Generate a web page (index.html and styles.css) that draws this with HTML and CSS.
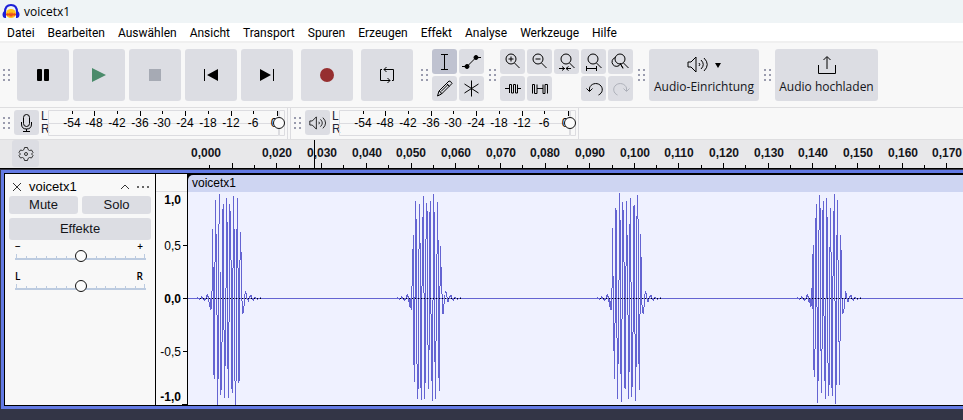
FILE: index.html
```html
<!DOCTYPE html>
<html lang="de">
<head>
<meta charset="utf-8">
<title>voicetx1</title>
<link rel="stylesheet" href="styles.css">
</head>
<body>
<header class="titlebar">
  <svg class="logo" width="18" height="18" viewBox="0 0 18 18" aria-hidden="true">
    <ellipse cx="9" cy="10.500" rx="5" ry="4.500" fill="#ffc21c"/>
    <path d="M4 11l2-1 1 1 1-2 1 2 1-2 1 2 1-1 2 1v1l-2 1-1-1-1 2-1-1-1 1-1-2-1 1-2-1z" fill="#f0501a"/>
    <path d="M3 9C3 4 5.500 2 9 2s6 2 6 7" fill="none" stroke="#1d20d8" stroke-width="2"/>
    <path d="M4 7v8C1.500 15.500.5 13.500.5 11.500S2 7.500 4 7zM14 7v8c2.500.5 3.500-1.500 3.500-3.500S16 7.500 14 7z" fill="#1d20d8"/>
  </svg>
  <span>voicetx1</span>
</header>
<nav class="menubar">
  <a href="#">Datei</a><a href="#">Bearbeiten</a><a href="#">Auswählen</a><a href="#">Ansicht</a><a href="#">Transport</a><a href="#">Spuren</a><a href="#">Erzeugen</a><a href="#">Effekt</a><a href="#">Analyse</a><a href="#">Werkzeuge</a><a href="#">Hilfe</a>
</nav>

<svg class="defs" width="0" height="0" aria-hidden="true">
  <defs>
    <g id="grip" fill="#9a9cae"><path d="M0 0h2v2H0zM5 0h2v2H5zM0 5h2v2H0zM5 5h2v2H5zM0 10h2v2H0zM5 10h2v2H5z"/></g>
    <g id="lens"><circle cx="11" cy="10" r="5"/><path d="M14.500 14l5 5"/></g>
    <g id="speaker"><path d="M1 7h3l5-5v15l-5-5H1z"/><path d="M12 8q1.500 1.500 0 3M14 5q4.500 4.500 0 9M17 3q6.500 6.500 0 13"/></g>
    <path id="wiggle" stroke-width="3" d="M43.500 0V3M52.500-3V0M58.500 0V4M64.500-6V0M67.500-3V3M70.500 0V5M73.500 0V7M76.500 0V4M79.500-9V0M82.500-12V-4M85.500-7V12M205.500 2V12M208.500-7V0M211.500-10V-4M214.500-9V0M217.500 0V4M220.500 0V7M223.500-3V0M226.500-5V0M232.500 0V4M241.500-4V0M247.500 0V3M264.500 0V3"/>
    <path id="dots" stroke="#000" stroke-width="3" stroke-dasharray="3 6" d="M60 0H250"/>
    <g id="scale">
      <path d="M.5.5H230.500V25.500H.5zM231.500.5H236.500V25.500H231.500zM0 13.500H230" fill="none" stroke="#dcdce0"/>
      <path d="M24.500 1v3M46.500 1v5M69.500 1v3M92.500 1v5M114.500 1v3M137.500 1v5M160.500 1v3M183.500 1v5M205.500 1v3M229.500 1v5" stroke="#000"/>
      <g class="scale-text" text-anchor="middle">
        <text x="24" y="17">-54</text><text x="46" y="17">-48</text><text x="69" y="17">-42</text><text x="92" y="17">-36</text><text x="114" y="17">-30</text><text x="137" y="17">-24</text><text x="160" y="17">-18</text><text x="183" y="17">-12</text><text x="205" y="17">-6</text><text x="226" y="17">0</text>
      </g>
    </g>
    <path id="slider-scale" stroke="#bccbe0" d="M0 9.500H131M0 10.500H131M1.500 5v5M11.500 7v3M21.500 7v3M31.500 7v3M41.500 7v3M51.500 7v3M61.500 7v3M71.500 7v3M81.500 7v3M90.500 7v3M100.500 7v3M110.500 7v3M120.500 7v3M129.500 5v5"/>
  </defs>
</svg>

<section class="toolbar" aria-label="Werkzeugleisten">
  <svg class="grip" width="7" height="12"><use href="#grip"/></svg>
  <div class="group">
    <button class="big" aria-label="Pause"><svg width="24" height="24"><rect x="6" y="6" width="5" height="12" rx="1"/><rect x="13" y="6" width="5" height="12" rx="1"/></svg></button>
    <button class="big" aria-label="Wiedergabe"><svg width="24" height="24"><path d="M5 5v14l14-7z" fill="#4b8b6b"/></svg></button>
    <button class="big" aria-label="Stopp"><svg width="24" height="24"><path d="M6 6h12v12H6z" fill="#a6aab4"/></svg></button>
    <button class="big" aria-label="Zum Anfang"><svg width="24" height="24"><path d="M5 6h1v12H5zM19 6v12L8 12z"/></svg></button>
    <button class="big" aria-label="Zum Ende"><svg width="24" height="24"><path d="M18 6h1v12h-1zM5 6v12l11-6z"/></svg></button>
  </div>
  <button class="big apart" aria-label="Aufnahme"><svg width="24" height="24"><circle cx="12" cy="12" r="7" fill="#962f30"/></svg></button>
  <button class="big apart" aria-label="Schleife"><svg class="line" width="24" height="24"><path d="M7 6.500H5.500V17.500H15M17 17.500h1.500V6.500H9M11.500 4L9 6.500 11.500 9M12.500 15l2.500 2.500L12.500 20"/></svg></button>
  <svg class="grip wide" width="7" height="12"><use href="#grip"/></svg>
  <div class="tools two">
    <button class="small on" aria-label="Auswahl"><svg class="line" width="25" height="25"><path d="M9 5.500h7M12.500 5.500V20M9 20.500h7"/></svg></button>
    <button class="small" aria-label="Hüllkurve"><svg class="line" width="25" height="25"><path d="M3 17.500h5L17 8.500h5"/><circle cx="8" cy="17.500" r="2" fill="#000"/><circle cx="17" cy="8.500" r="2" fill="#000"/></svg></button>
    <button class="small" aria-label="Zeichnen"><svg class="line" width="25" height="25"><path d="M5.500 20l1.500-5L17 5q1.500-.5 3 2.500L9.500 18zM14.500 7.500l3 3M7 15q2 .5 2.500 3M9 15.500l7-7"/></svg></button>
    <button class="small" aria-label="Multi-Werkzeug"><svg class="line" width="25" height="25"><path d="M12.500 4.500v16M5.500 8l14 9M19.500 8l-14 9"/></svg></button>
  </div>
  <svg class="grip" width="7" height="12"><use href="#grip"/></svg>
  <div class="tools five">
    <button class="small" aria-label="Vergrößern"><svg class="line" width="25" height="25"><use href="#lens"/><path d="M8.500 10h5M11 7.500v5"/></svg></button>
    <button class="small" aria-label="Verkleinern"><svg class="line" width="25" height="25"><use href="#lens"/><path d="M8.500 10h5"/></svg></button>
    <button class="small" aria-label="Auswahl einpassen"><svg class="line" width="25" height="25"><use href="#lens" x="1"/><path d="M5 19.500h6M12 19.500h5M8 17.500l2.500 2-2.500 2M14.500 17.500l-2.500 2 2.500 2"/></svg></button>
    <button class="small" aria-label="Projekt einpassen"><svg class="line" width="25" height="25"><use href="#lens" x="1"/><path d="M5.500 17v5M15.500 17v5M5.500 19.500h10"/></svg></button>
    <button class="small" aria-label="Zoom umschalten"><svg class="line" width="25" height="25"><use href="#lens" x="1"/><path d="M7.500 8.500A4.500 4.500 0 1 0 12.500 15L15 19.500M12 14l3 5"/></svg></button>
    <button class="small" aria-label="Trimmen"><svg class="line" width="25" height="25"><path d="M5 12.500h4M9.500 17V8.500h2V17h2V8.500h2V17h2V8.500M17.500 12.500H21"/></svg></button>
    <button class="small" aria-label="Stille"><svg class="line" width="25" height="25"><path d="M5.500 17.500V8.500h2v9h2.500v-9M10 12.500h6M16 17.500V8.500M16 17.500h2v-9h2.500v9"/></svg></button>
    <button class="small undo" aria-label="Rückgängig"><svg class="line" width="25" height="25"><path d="M8.500 15V12a6.500 6 0 1 1 9 7M5.500 12.500l3 3 3-3"/></svg></button>
    <button class="small" aria-label="Wiederholen"><svg class="line pale" width="25" height="25"><path d="M18.500 15V12a6.500 6 0 1 0-9 7M21.500 12.500l-3 3-3-3"/></svg></button>
  </div>
  <svg class="grip" width="7" height="12"><use href="#grip"/></svg>
  <button class="labelled setup"><span class="pair"><svg class="line" width="22" height="20"><use href="#speaker"/></svg><svg width="6" height="5"><path d="M0 0h6L3 5z"/></svg></span><span>Audio-Einrichtung</span></button>
  <svg class="grip" width="7" height="12"><use href="#grip"/></svg>
  <button class="labelled upload"><svg class="line" width="20" height="20"><path d="M1.500 10v8.500h17V10M10 14V2M6.500 5L10 1.500 13.500 5"/></svg><span>Audio hochladen</span></button>
</section>

<section class="meters" aria-label="Pegel">
  <div class="meter-bar">
    <svg class="grip" width="7" height="12"><use href="#grip"/></svg>
    <button class="small" aria-label="Aufnahmepegel"><svg class="line" width="25" height="25"><rect x="9.500" y="4.500" width="6" height="12" rx="3"/><path d="M7.500 12v2q0 5 5 5t5-5v-2M12.500 19v2M9 21.500h7"/></svg></button>
    <div class="channels"><span>L</span><span>R</span></div>
    <div class="meter"><svg width="237" height="26"><use href="#scale"/></svg><input type="range" value="100" aria-label="Aufnahmelautstärke"></div>
  </div>
  <div class="meter-bar">
    <svg class="grip" width="7" height="12"><use href="#grip"/></svg>
    <button class="small" aria-label="Wiedergabepegel"><svg class="line" width="18" height="16" viewBox="0 0 22 19"><use href="#speaker"/></svg></button>
    <div class="channels"><span>L</span><span>R</span></div>
    <div class="meter"><svg width="237" height="26"><use href="#scale"/></svg><input type="range" value="100" aria-label="Wiedergabelautstärke"></div>
  </div>
</section>

<section class="timeline" aria-label="Zeitachse">
  <div class="timeline-head"><button class="gear" aria-label="Zeitachsenoptionen"><svg class="line dim" width="16" height="16"><path d="M6.500 1.500h3l.5 2 1.500 1 2-.5 1.500 2.500L13.500 8l1.500 1.500-1.500 2.500-2-.5-1.500 1-.5 2h-3l-.5-2-1.500-1-2 .5L1 9.500 2.500 8 1 6.500 2.500 4l2 .5 1.500-1z"/><circle cx="8" cy="8" r="1.500"/></svg></button></div>
  <svg class="time-ruler" height="28">
    <path stroke="#000" d="M21.500 25v3M44.500 23v5M66.500 25v3M88.500 23v5M111.500 25v3M133.500 23v5M155.500 25v3M178.500 23v5M200.500 25v3M223.500 23v5M245.500 25v3M267.500 23v5M290.500 25v3M312.500 23v5M334.500 25v3M357.500 23v5M379.500 25v3M401.500 23v5M424.500 25v3M446.500 23v5M468.500 25v3M490.500 23v5M513.500 25v3M535.500 23v5M557.500 25v3M580.500 23v5M602.500 25v3M624.500 23v5M647.500 25v3M669.500 23v5M691.500 25v3M714.500 23v5M736.500 25v3M758.500 23v5"/>
    <path stroke="#000" d="M126.500 0v28"/>
    <g class="time-text" text-anchor="middle">
      <text x="18" y="17">0,000</text><text x="89" y="17">0,020</text><text x="134" y="17">0,030</text><text x="179" y="17">0,040</text><text x="223" y="17">0,050</text><text x="268" y="17">0,060</text><text x="313" y="17">0,070</text><text x="357" y="17">0,080</text><text x="402" y="17">0,090</text><text x="447" y="17">0,100</text><text x="491" y="17">0,110</text><text x="536" y="17">0,120</text><text x="581" y="17">0,130</text><text x="625" y="17">0,140</text><text x="670" y="17">0,150</text><text x="715" y="17">0,160</text><text x="759" y="17">0,170</text>
    </g>
  </svg>
</section>

<main class="tracks">
  <article class="track">
    <aside class="panel">
      <div class="panel-head">
        <button class="bare" aria-label="Spur schließen"><svg class="line dim" width="10" height="10"><path d="M1 1l8 8M9 1L1 9"/></svg></button>
        <span class="name">voicetx1</span>
        <button class="bare" aria-label="Einklappen"><svg class="line dim" width="10" height="10"><path d="M1 7l4-4 4 4"/></svg></button>
        <button class="bare" aria-label="Menü"><svg width="12" height="10" fill="#666"><path d="M0 4h2v2H0zM5 4h2v2H5zM10 4h2v2h-2z"/></svg></button>
      </div>
      <div class="panel-buttons"><button>Mute</button><button>Solo</button><button class="effects">Effekte</button></div>
      <div class="slider">
        <div class="ends"><span>−</span><span>+</span></div>
        <div class="rail"><svg width="131" height="13"><use href="#slider-scale"/></svg><input type="range" value="50" aria-label="Verstärkung"></div>
      </div>
      <div class="slider">
        <div class="ends"><span>L</span><span>R</span></div>
        <div class="rail"><svg width="131" height="13"><use href="#slider-scale"/></svg><input type="range" value="50" aria-label="Panorama"></div>
      </div>
    </aside>
    <svg class="level-ruler" width="31" height="231">
      <path d="M0 17.500H31" stroke="#dcdce0"/>
      <path d="M27 71.500h4M27 124.500h4M27 177.500h4M26 230.500h5" stroke="#000"/>
      <g text-anchor="end">
        <text class="strong" x="25" y="30">1,0</text><text x="25" y="76">0,5</text><text class="strong" x="25" y="129">0,0</text><text x="25" y="182">-0,5</text><text class="strong" x="25" y="227">-1,0</text>
      </g>
    </svg>
    <div class="clip">
      <div class="clip-head">voicetx1</div>
      <svg class="wave" height="213" fill="none" stroke="#6464d2" shape-rendering="crispEdges">
        <path d="M0 106.500H4000"/>
        <g transform="translate(-8 -22) scale(.33333)">
          <use href="#wiggle" y="385"/>
          <path stroke-width="3" d="M88.500 396V411M91.500 385V420M94.500 363V417M97.500 177V363M100.500 291V615M103.500 276V627M106.500 90V276M109.500 192V435M112.500 435V705M115.500 162V627M118.500 72V162M121.500 306V675M124.500 516V660M127.500 117V516M130.500 102V480M133.500 480V684M136.500 354V588M139.500 84V354M142.500 156V597M145.500 456V684M148.500 102V456M151.500 123V270M154.500 270V657M157.500 294V669M160.500 78V294M163.500 177V633M166.500 633V705M169.500 177V633M172.500 84V294M175.500 294V639M178.500 270V633M181.500 186V270M184.500 246V393M187.500 393V432M190.500 408V429M193.500 372V408M196.500 363V372M199.500 369V387M202.500 387V390"/>
          <use href="#dots" y="385.500"/>
        </g>
        <g transform="translate(192 -12) scale(.33333)">
          <use href="#wiggle" y="355"/>
          <path stroke-width="3" d="M88.500 356V380M91.500 356V383M94.500 318V390M97.500 207V318M100.500 165V555M103.500 350V605M106.500 63V355M109.500 117V552M112.500 552V657M115.500 207V627M118.500 72V207M121.500 189V624M124.500 318V660M127.500 111V318M130.500 48V339M133.500 339V657M136.500 177V609M139.500 69V177M142.500 93V495M145.500 495V627M148.500 96V510M151.500 63V402M154.500 402V603M157.500 360V663M160.500 42V360M163.500 96V546M166.500 483V657M169.500 222V483M172.500 66V222M175.500 180V594M178.500 318V633M181.500 198V318M184.500 261V342M187.500 342V402M190.500 372V402M193.500 345V372M196.500 333V339M199.500 336V350M202.500 350V366"/>
          <use href="#dots" y="355.500"/>
        </g>
        <g transform="translate(392 -27) scale(.33333)">
          <use href="#wiggle" y="400"/>
          <path stroke-width="3" d="M88.500 400V426M91.500 408V435M94.500 369V435M97.500 189V369M100.500 333V558M103.500 474V642M106.500 129V474M109.500 135V519M112.500 519V702M115.500 345V597M118.500 84V345M121.500 165V627M124.500 462V711M127.500 111V462M130.500 135V291M133.500 291V669M136.500 303V672M139.500 108V303M142.500 210V450M145.500 450V702M148.500 177V621M151.500 99V351M154.500 351V696M157.500 501V666M160.500 123V501M163.500 120V507M166.500 507V708M169.500 153V606M172.500 90V162M175.500 162V597M178.500 447V675M181.500 207V447M184.500 276V420M187.500 420V444M190.500 426V447M193.500 387V426M196.500 378V387M199.500 384V402M202.500 402V411"/>
          <use href="#dots" y="400.500"/>
        </g>
        <g transform="translate(592 -52) scale(.33333)">
          <use href="#wiggle" y="475"/>
          <path stroke-width="3" d="M88.500 475V489M91.500 475V500M94.500 444V498M97.500 342V507M100.500 315V690M103.500 627V711M106.500 234V627M109.500 192V501M112.500 501V789M115.500 270V723M118.500 165V270M121.500 204V633M124.500 627V759M127.500 210V627M130.500 183V528M133.500 528V723M136.500 475V777M139.500 174V475M142.500 231V669M145.500 669V768M148.500 321V735M151.500 204V336M154.500 336V744M157.500 408V768M160.500 213V408M163.500 162V483M166.500 483V792M169.500 285V735M172.500 180V360M175.500 360V606M178.500 603V735M181.500 285V603M184.500 330V475M187.500 475V522M190.500 507V520M193.500 475V507M196.500 453V475M199.500 459V475M202.500 475V486"/>
          <use href="#dots" y="475.500"/>
        </g>
      </svg>
    </div>
  </article>
</main>
</body>
</html>
```
FILE: styles.css
```css
* { box-sizing: border-box; }

body {
  margin: 0;
  min-height: 100vh;
  background: #333546;
  color: #000;
  font: 12px/16px "Open Sans", "Noto Sans", sans-serif;
  overflow-x: hidden;
}

svg { display: block; flex: none; }
.defs { position: absolute; }

button {
  display: flex;
  align-items: center;
  justify-content: center;
  flex: none;
  margin: 0;
  padding: 0;
  border: 0;
  border-radius: 3px;
  background: #dcdde3;
  color: #14151a;
  font: inherit;
}

.line { fill: none; stroke: #000; }
.dim { stroke: #333; }
.pale { stroke: #aeb1ba; }

.titlebar {
  display: flex;
  align-items: center;
  gap: 4px;
  height: 23px;
  padding: 0 2px;
  background: #eff4f6;
}

.menubar {
  display: flex;
  gap: 13px;
  height: 20px;
  padding: 2px 7px 0;
  background: #fff;
  border-bottom: 2px solid #f0f0f0;
  font-family: Roboto, "Open Sans", sans-serif;
}
.menubar a { color: #000; text-decoration: none; white-space: nowrap; }

.toolbar {
  display: flex;
  align-items: center;
  height: 65px;
  padding: 0 3px;
  background: #f8f8f8;
  border-bottom: 1px solid #dedee0;
}
.grip { margin: 0 4px 0 5px; }
.grip.wide { margin-left: 8px; }
.grip:first-child { margin-left: 0; }
.toolbar .grip:first-child { margin-right: 7px; }
.group { display: flex; gap: 4px; }
.big { width: 52px; height: 52px; }
.apart { margin-left: 8px; }
.tools { display: grid; gap: 2px; }
.two { grid-template-columns: repeat(2, 25px); }
.five { grid-template-columns: repeat(5, 25px); }
.small { width: 25px; height: 25px; }
.on { background: #bfc2d0; }
.undo { grid-column: 4; }
.labelled { flex-direction: column; height: 52px; gap: 4px; padding: 0 4px; white-space: nowrap; }
.setup { min-width: 110px; }
.upload { min-width: 103px; }
.pair { display: flex; align-items: center; gap: 6px; }

.meters {
  display: flex;
  height: 32px;
  padding: 0 3px;
  background: #f8f8f8;
  border-bottom: 1px solid #dedee0;
}
.meter-bar {
  display: flex;
  align-items: center;
  padding: 0 2px 2px 0;
  border-right: 1px solid #dcdce0;
}
.meter-bar + .meter-bar { margin-left: 2px; padding-left: 3px; border-left: 1px solid #dcdce0; }
.channels {
  display: flex;
  flex-direction: column;
  width: 9px;
  padding-left: 2px;
  color: #22263a;
  font: 12px/13px "Liberation Sans", Arial, sans-serif;
}
.meter { position: relative; }
.scale-text { font: 12px "Liberation Sans", Arial, sans-serif; }

input[type="range"] {
  position: absolute;
  inset: 0;
  width: 100%;
  height: 100%;
  margin: 0;
  background: transparent;
  appearance: none;
}
input[type="range"]::-webkit-slider-thumb {
  appearance: none;
  width: 12px;
  height: 12px;
  border: 1px solid #111;
  border-radius: 50%;
  background: #fbfbfb;
}

.timeline { display: flex; height: 29px; background: #e8e8ea; border-bottom: 1px solid #000; }
.timeline-head { flex: none; width: 188px; padding-left: 12px; }
.gear { width: 27px; height: 27px; }
.time-ruler { flex: 1; min-width: 0; overflow: hidden; }
.time-text { font: bold 12px "Liberation Sans", Arial, sans-serif; fill: #14151a; }

.tracks { padding: 1px 0 0 1px; }
.track {
  display: flex;
  border: 3px solid #637ae4;
  border-right: 0;
  background: #000;
  padding: 1px 0 1px 1px;
  font: 13px/16px "Liberation Sans", Arial, sans-serif;
}
.panel { flex: none; width: 150px; padding: 4px; background: #f8f8f8; }
.panel-head { display: flex; align-items: center; gap: 7px; height: 18px; padding: 0 2px 0 3px; }
.bare { background: none; }
.name { flex: 1; }
.panel-buttons { display: grid; grid-template-columns: 1fr 1fr; gap: 4px; }
.panel-buttons button { height: 18px; }
.panel-buttons .effects { grid-column: 1 / 3; height: 22px; }
.slider { height: 30px; padding: 1px 5px 0 6px; }
.ends { display: flex; justify-content: space-between; height: 8px; padding-right: 3px; font: 10px/10px "Open Sans", "Noto Sans", sans-serif; font-weight: 600; }
.rail { position: relative; }

.level-ruler { margin-left: 1px; background: #f8f8f8; font-size: 12px; }
.strong { font-weight: bold; }

.clip { flex: 1; min-width: 0; margin: 1px 0 0 1px; }
.clip-head {
  height: 17px;
  padding-left: 4px;
  background: #ced5f2;
  border-top-left-radius: 5px;
  font-size: 12px;
}
.wave { width: 100%; overflow: hidden; background: #eff1ff; }
```
